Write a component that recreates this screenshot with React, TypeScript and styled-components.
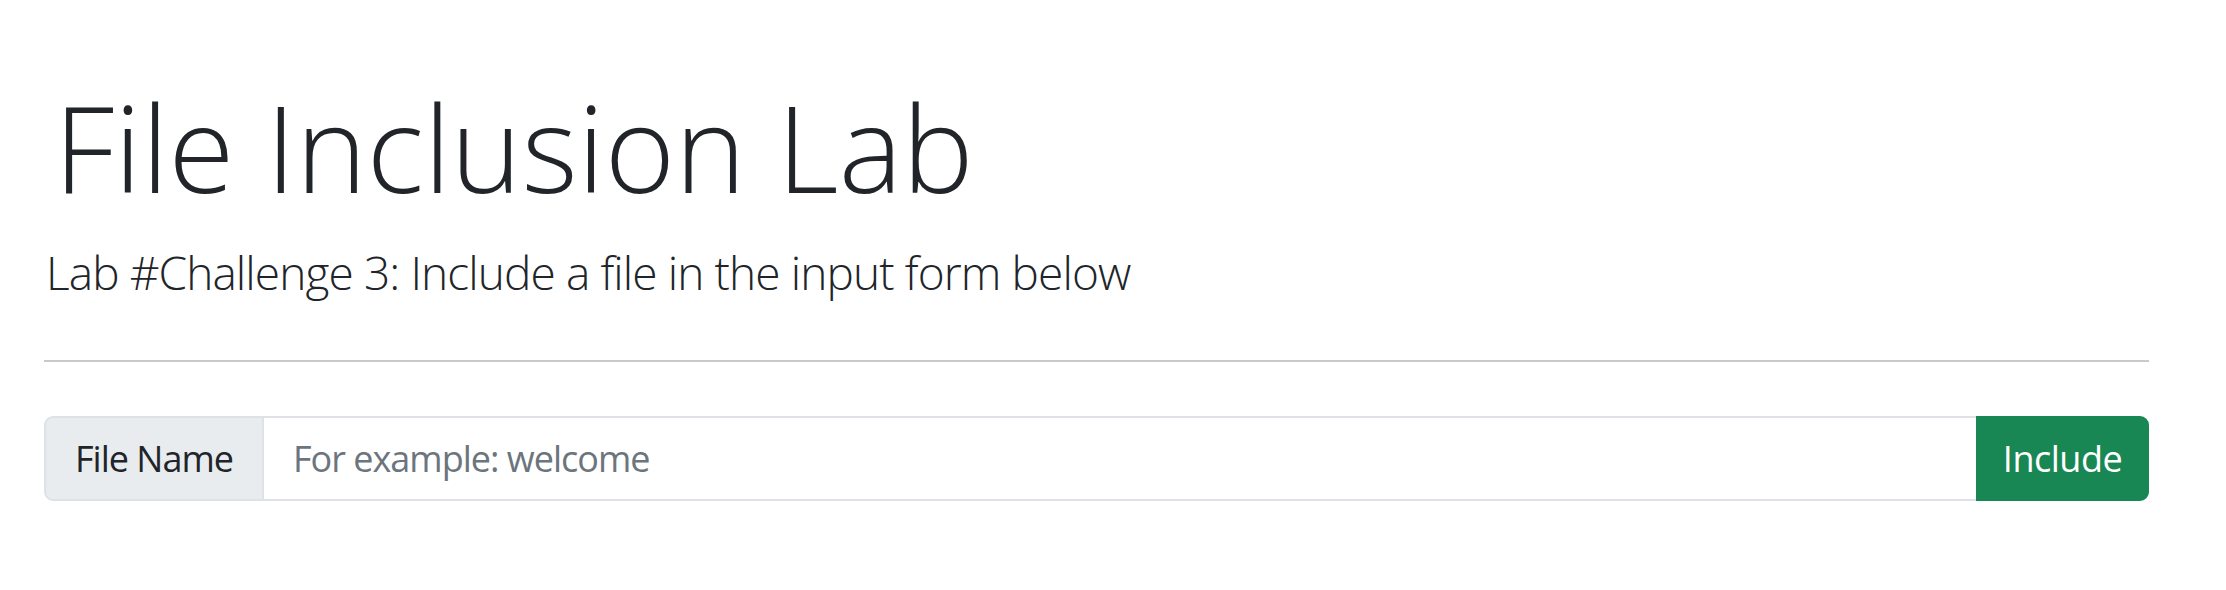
import React from "react";
import styled, { createGlobalStyle } from "styled-components";

const GlobalStyle = createGlobalStyle`
  html, body {
    margin: 0;
    padding: 0;
    background: #ffffff;
  }
  body {
    font-family: "Open Sans", "Noto Sans", sans-serif;
    color: #212529;
  }
`;

const Page = styled.main`
  padding: 75px 77px 0 44px;
  display: flex;
  flex-direction: column;
`;

const Title = styled.h1`
  margin: 0 0 0 10px;
  font-family: "Open Sans", sans-serif;
  font-weight: 300;
  font-size: 120px;
  line-height: 144px;
  color: #212529;
  letter-spacing: 0;
`;

const Lead = styled.p`
  margin: 19px 0 0 2px;
  font-family: "Open Sans", sans-serif;
  font-weight: 300;
  font-size: 46px;
  line-height: 69px;
  color: #212529;
  letter-spacing: -0.9px;
`;

const Rule = styled.hr`
  margin: 53px 0 0 0;
  border: 0;
  border-top: 2px solid #c8c9ca;
  height: 0;
`;

const InputGroup = styled.form`
  margin-top: 54px;
  display: flex;
  align-items: stretch;
  height: 85px;
`;

const Addon = styled.span`
  display: flex;
  align-items: center;
  padding: 0 29px;
  background: #e9ecef;
  border: 2px solid #dee2e6;
  border-radius: 9px 0 0 9px;
  font-size: 36px;
  letter-spacing: -1px;
  color: #212529;
  white-space: nowrap;
`;

const Field = styled.input`
  flex: 1;
  min-width: 0;
  margin-left: -2px;
  padding: 0 29px;
  border: 2px solid #dee2e6;
  border-radius: 0;
  background: #ffffff;
  font-family: "Open Sans", sans-serif;
  font-size: 36px;
  letter-spacing: -1px;
  color: #212529;
  outline: none;
  &::placeholder {
    color: #6c757d;
  }
`;

const Button = styled.button`
  width: 173px;
  margin-left: -2px;
  border: 2px solid #198754;
  border-radius: 0 9px 9px 0;
  background: #198754;
  color: #ffffff;
  font-family: "Open Sans", sans-serif;
  font-size: 36px;
  letter-spacing: -0.5px;
  cursor: pointer;
`;

export default function App() {
  return (
    <>
      <GlobalStyle />
      <Page>
        <Title>File Inclusion Lab</Title>
        <Lead>Lab #Challenge 3: Include a file in the input form below</Lead>
        <Rule />
        <InputGroup onSubmit={(e) => e.preventDefault()}>
          <Addon>File Name</Addon>
          <Field type="text" placeholder="For example: welcome" />
          <Button type="submit">Include</Button>
        </InputGroup>
      </Page>
    </>
  );
}
